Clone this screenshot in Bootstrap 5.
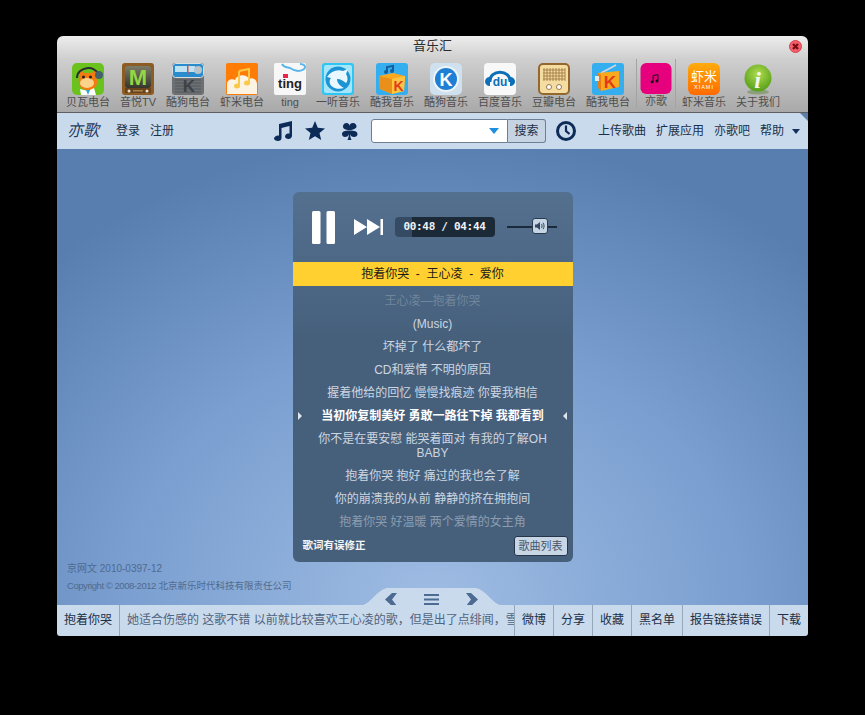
<!DOCTYPE html>
<html lang="zh">
<head>
<meta charset="UTF-8"/>
<title>音乐汇</title>
<link href="https://cdn.jsdelivr.net/npm/bootstrap@5.3.3/dist/css/bootstrap.min.css" rel="stylesheet"/>
<style>
body { background: #000; font-family: "Liberation Sans", "Noto Sans CJK SC", sans-serif; font-size: 12px; }
.app-window { width: 751px; height: 600px; margin: 36px 0 0 57px; border-radius: 6px 6px 3px 3px; overflow: hidden; }

/* barre du haut */
.top-zone { height: 77px; background: linear-gradient(#ededed, #cfcfcf 30%, #a9a9a9); border-bottom: 1px solid #5f5f5f; }
.app-title { height: 27px; line-height: 20px; font-size: 13px; color: #2c2c2c; }
.close-dot { position: absolute; right: 6px; top: 4px; width: 13px; height: 13px; }
.icon-row { padding-left: 9px; gap: 10px; }
.app-item { font-size: 11px; line-height: 13px; color: #4e4e4e; min-width: 32px; white-space: nowrap; }
.app-item svg { width: 32px; height: 32px; display: block; margin-bottom: 1px; }
.app-current { width: 40px; margin: -4px -4px 0; padding-top: 4px; height: 49px; border-left: 1px solid #a3a3a3; border-right: 1px solid #a3a3a3; }

/* barre de navigation */
.nav-zone { height: 36px; background: #c9daed; padding-left: 10px; color: #1b3047; white-space: nowrap; }
.nav-zone > * { flex-shrink: 0; }
.brand-name { width: 49px; font-family: "Liberation Serif", "Noto Sans CJK SC", serif; font-style: italic; font-size: 16px; color: #1e3a5f; }
.nav-pair { gap: 10px; width: 157px; }
.nav-icons { gap: 12px; width: 98px; }
.nav-icons svg, .clock-icon { display: block; fill: #0d2b57; }
.search-box { width: 137px; height: 24px; background: #fff; border: 1px solid #6d7f92; border-radius: 3px 0 0 3px; }
.search-btn { width: 38px; height: 24px; padding: 0; font-size: 12px; line-height: 22px; color: #1b3047; background: #c5d3e3; border: 1px solid #6d7f92; border-left: 0; border-radius: 0 3px 3px 0; }
.clock-icon { margin: 0 22px 0 10px; }
.nav-right { gap: 10px; }
.nav-caret { width: 0; height: 0; margin-left: -2px; border: 4px solid transparent; border-top: 5px solid #14305a; border-bottom: 0; }
.corner-fold { position: absolute; right: 0; top: 0; border-top: 8px solid #5d7ea8; border-left: 8px solid transparent; }

/* zone centrale */
.main-zone { height: 456px; background: radial-gradient(ellipse 560px 470px at 50% 100%, #9fbce3 0, #7a9fd0 55%, #587eb0 100%); }
.player-box { width: 280px; height: 370px; margin-top: 43px; border-radius: 6px; background: linear-gradient(#54708f, #46607c 40%); overflow: hidden; }
.control-row { height: 70px; padding-left: 19px; }
.pause-icon { width: 23px; height: 33px; display: block; margin-right: 19px; }
.next-icon { width: 29px; height: 16px; display: block; margin-right: 12px; }
.time-box { width: 100px; height: 20px; border-radius: 4px; background: linear-gradient(90deg, #354b63 17%, #1c2937 17%); color: #eef2f6; font-family: "DejaVu Sans Mono", monospace; font-weight: 700; font-size: 11px; letter-spacing: -.3px; line-height: 20px; text-align: center; }
.volume-track { width: 50px; height: 2px; margin-left: 12px; background: #1b2a3a; }
.volume-thumb { position: absolute; left: 25px; top: -8px; width: 16px; height: 16px; border: 1px solid #2b3a4c; border-radius: 3px; background: #c6d5e6; }
.song-bar { height: 24px; line-height: 24px; background: #ffd02f; color: #1a1a1a; text-align: center; white-space: pre; }
.lyric-list { height: 248px; padding: 8px 25px 0; overflow: hidden; text-align: center; color: #cdd6e0; line-height: 14px; }
.lyric-list p { margin: 0 0 9px; }
.lyric-fade1 { color: #71869c; }
.lyric-fade2 { color: #8c9db0; }
.lyric-now { color: #fff; font-weight: 700; margin: 0 -20px 9px !important; }
.tri-r { width: 0; height: 0; border-left: 4px solid #dfe6ee; border-top: 4px solid transparent; border-bottom: 4px solid transparent; }
.tri-l { width: 0; height: 0; border-right: 4px solid #dfe6ee; border-top: 4px solid transparent; border-bottom: 4px solid transparent; }
.player-foot { height: 28px; padding: 0 5px 4px 10px; }
.fix-link { font-size: 10.5px; font-weight: 700; color: #f2f5f8; }
.list-btn { width: 54px; height: 20px; padding: 0; font-size: 11px; line-height: 18px; color: #46566a; background: #c8d5e4; border: 1px solid #25364a; border-radius: 3px; }
.bottom-row { height: 43px; margin-top: auto; }
.legal-text { width: 306px; margin-top: -2px; padding-left: 10px; color: #4f6a8f; font-size: 9.5px; line-height: 17px; }
.legal-first { font-size: 10px; }
.legal-latin { letter-spacing: -.45px; }
.tab-box { width: 137px; height: 17px; padding: 6px 22px 0; background: #c9daed; clip-path: path("M0 17 C8 15 14 2 24 0 L113 0 C123 2 129 15 137 17 Z"); }

/* barre du bas */
.foot-zone { height: 31px; background: #c9daed; line-height: 30px; color: #1b3047; white-space: nowrap; }
.foot-cell { padding: 0 7px; border-left: 1px solid #97a7ba; flex: none; }
.foot-first { width: 63px; padding: 0; text-align: center; border-left: 0; border-right: 1px solid #97a7ba; flex: none; }
.foot-scroll { padding-left: 7px; color: #50647e; overflow: hidden; min-width: 0; }
</style>
</head>
<body>
<div class="app-window d-flex flex-column">

  <!-- barre du haut avec les icônes -->
  <div class="top-zone flex-shrink-0">
    <div class="app-title position-relative text-center">音乐汇
      <svg class="close-dot" viewBox="0 0 13 13"><circle cx="6.5" cy="6.5" r="6" fill="#f2606c" stroke="#d8404c"/><path d="M4 4l5 5M9 4l-5 5" stroke="#7c0d16" stroke-width="2.4"/></svg>
    </div>
    <div class="icon-row d-flex">
      <div class="app-item d-flex flex-column align-items-center">
        <svg viewBox="0 0 32 32"><rect width="32" height="32" rx="5" fill="#6cc21d"/><path d="M8 6l4 4h8l3-4 1 8c3 6 0 13-8 13S6 21 7 14z" fill="#f47a12"/><ellipse cx="15" cy="20" rx="7" ry="5" fill="#fbd38a"/><circle cx="11.500" cy="14" r="1.500" fill="#222"/><circle cx="18.500" cy="14" r="1.500" fill="#222"/><path d="M5 15C5 4 23 1 27 12" fill="none" stroke="#26322f" stroke-width="2"/><circle cx="27" cy="12" r="4" fill="#45606e"/><path d="M8 26l8 2 6-3 2 7H9z" fill="#fff"/><path d="M14 27l2 5 2-5z" fill="#3aa0dc"/></svg>
        贝瓦电台
      </div>
      <div class="app-item d-flex flex-column align-items-center">
        <svg viewBox="0 0 32 32"><defs><linearGradient id="gTv" x1="0" y1="0" x2="0" y2="1"><stop offset="0" stop-color="#7d7c68"/><stop offset="1" stop-color="#35352c"/></linearGradient></defs><rect width="32" height="32" rx="3" fill="#8d5c24"/><rect x="3" y="3" width="26" height="22" rx="3" fill="url(#gTv)"/><text x="16" y="22" text-anchor="middle" font-family="Liberation Sans" font-weight="700" font-size="22" fill="#93d643">M</text><rect x="3" y="25" width="26" height="5" fill="#6b431a"/><circle cx="7" cy="28" r="1.500" fill="#e9dfcf"/><circle cx="25" cy="28" r="1.500" fill="#e9dfcf"/><rect x="11" y="27" width="10" height="1.500" fill="#a68250"/></svg>
        音悦TV
      </div>
      <div class="app-item d-flex flex-column align-items-center">
        <svg viewBox="0 0 32 32"><rect width="32" height="32" rx="3" fill="#6d7072"/><rect x=".5" y=".5" width="31" height="14" rx="3" fill="#2a8ccc" stroke="#d8dde0"/><rect x="3" y="3" width="20" height="6" fill="#bfe2f2"/><rect x="15" y="2" width="1.500" height="9" fill="#e0483a"/><circle cx="26" cy="7" r="4" fill="#b9c3ca"/><path d="M3 17h26M3 20h26M3 23h26M3 26h26M3 29h26" stroke="#55595c" stroke-width="1.200"/><text x="17" y="29" text-anchor="middle" font-family="Liberation Sans" font-weight="700" font-size="17" fill="#3e4245">K</text></svg>
        酷狗电台
      </div>
      <div class="app-item d-flex flex-column align-items-center">
        <svg viewBox="0 0 32 32"><rect width="32" height="32" rx="2" fill="#ff7d06"/><path d="M1 31V21c0-4 5-6 8-4 2-6 12-6 14-1 4-2 8 1 8 5v10z" fill="#fdf3e3"/><path d="M13 8l10-2v14" fill="none" stroke="#fbc94a" stroke-width="2"/><path d="M13 8v15" stroke="#fbc94a" stroke-width="2"/><ellipse cx="11" cy="23" rx="3" ry="2.500" fill="#fbc94a"/><ellipse cx="21" cy="20" rx="3" ry="2.500" fill="#fbc94a"/></svg>
        虾米电台
      </div>
      <div class="app-item d-flex flex-column align-items-center">
        <svg viewBox="0 0 32 32"><rect width="32" height="32" rx="2" fill="#f7f7f7"/><path d="M8 1c2 4 6 3 8 4 3 2 5 3 8 3 4 0 7-2 7-4s-3-3-5-3" fill="none" stroke="#58b6ea" stroke-width="2"/><rect x="9" y="11" width="5" height="4" fill="#e8264a"/><text x="16" y="25" text-anchor="middle" font-family="Liberation Sans" font-weight="700" font-size="13" fill="#222">ting</text></svg>
        ting
      </div>
      <div class="app-item d-flex flex-column align-items-center">
        <svg viewBox="0 0 32 32"><rect width="32" height="32" rx="3" fill="#2fc5f5"/><rect x="2" y="2" width="28" height="28" rx="2" fill="#a6e6fb"/><circle cx="16" cy="16" r="12.500" fill="#1b94d6"/><path d="M5 14c4-6 10-8 16-6l5-2-2 5c2 3 2 7 0 9-3-2-5-4-9-4 0 4 3 7 7 9-6 2-12 0-14-4-1-3 0-5 1-6z" fill="#e9f8fe"/></svg>
        一听音乐
      </div>
      <div class="app-item d-flex flex-column align-items-center">
        <svg viewBox="0 0 32 32"><rect width="32" height="32" rx="3" fill="#35aef0"/><path d="M3 13l14-3 12 3-1 15-12 3-12-5z" fill="#f8a91f"/><path d="M16 16l13-3-1 15-12 3z" fill="#fbc541"/><path d="M3 13l13 3v15l-12-5z" fill="#e8901a"/><text x="22.500" y="28" text-anchor="middle" font-family="Liberation Sans" font-weight="700" font-size="14" fill="#e33a1a">K</text><path d="M11 9V4l6-1v5" fill="none" stroke="#155f9c" stroke-width="2"/><circle cx="10" cy="9" r="2" fill="#155f9c"/><circle cx="16" cy="8" r="2" fill="#155f9c"/></svg>
        酷我音乐
      </div>
      <div class="app-item d-flex flex-column align-items-center">
        <svg viewBox="0 0 32 32"><rect width="32" height="32" rx="5" fill="#cfe1ef"/><circle cx="16" cy="16" r="13" fill="#eef4f8"/><circle cx="16" cy="16" r="11" fill="#1f7fd4"/><text x="16" y="22.500" text-anchor="middle" font-family="Liberation Sans" font-weight="700" font-size="18" fill="#fff">K</text></svg>
        酷狗音乐
      </div>
      <div class="app-item d-flex flex-column align-items-center">
        <svg viewBox="0 0 32 32"><rect width="32" height="32" rx="4" fill="#f8f8f8"/><path d="M6 19C5 6 27 6 26 19" fill="none" stroke="#0d6fb8" stroke-width="3"/><path d="M6 14v9C3 23 1 21 1 18.500S3 14 6 14zM26 14v9c3 0 5-2 5-4.500S29 14 26 14z" fill="#0d6fb8"/><text x="16" y="23" text-anchor="middle" font-family="Liberation Sans" font-weight="700" font-size="12" fill="#0d6fb8">du</text></svg>
        百度音乐
      </div>
      <div class="app-item d-flex flex-column align-items-center">
        <svg viewBox="0 0 32 32"><rect x="1" y="1" width="30" height="30" rx="4" fill="#f5dca0" stroke="#94672f" stroke-width="2"/><path d="M6 5v13M9 5v13M12 5v13M15 5v13M18 5v13M21 5v13M24 5v13M27 5v13M5 7h22M5 10h22M5 13h22M5 16h22" stroke="#a17a45" stroke-width=".9"/><circle cx="11" cy="24" r="2.500" fill="#fff" stroke="#9a7a4c"/><circle cx="21" cy="24" r="2.500" fill="#fff" stroke="#9a7a4c"/></svg>
        豆瓣电台
      </div>
      <div class="app-item d-flex flex-column align-items-center">
        <svg viewBox="0 0 32 32"><rect width="32" height="32" rx="3" fill="#35aef0"/><path d="M9 10L24 2" stroke="#cfd8de" stroke-width="1.500"/><path d="M6 10l21-2v16L9 28z" fill="#f8a91f"/><path d="M6 10l3 2v16l-3-3z" fill="#e57f17"/><rect x="3" y="13" width="4" height="5" fill="#e8e8e8"/><text x="18" y="25" text-anchor="middle" font-family="Liberation Sans" font-weight="700" font-size="17" fill="#e33a1a">K</text></svg>
        酷我电台
      </div>
      <div class="app-item app-current d-flex flex-column align-items-center">
        <svg viewBox="0 0 32 32"><rect width="32" height="32" rx="6" fill="#e6007e"/><path d="M13 13l5-1v6" fill="none" stroke="#111" stroke-width="1"/><path d="M13 13v6" stroke="#111" stroke-width="1"/><circle cx="12" cy="19.500" r="1.500" fill="#111"/><circle cx="17" cy="18.500" r="1.500" fill="#111"/></svg>
        亦歌
      </div>
      <div class="app-item d-flex flex-column align-items-center">
        <svg viewBox="0 0 32 32"><defs><linearGradient id="gXiami" x1="0" y1="0" x2="0" y2="1"><stop offset="0" stop-color="#ffac0c"/><stop offset="1" stop-color="#ff6a00"/></linearGradient></defs><rect width="32" height="32" rx="6" fill="url(#gXiami)"/><text x="16" y="18" text-anchor="middle" font-family="Noto Sans CJK SC" font-size="13" fill="#fff">虾米</text><text x="16" y="25.500" text-anchor="middle" font-family="Liberation Sans" font-size="5.500" letter-spacing="1" fill="#fff">XIAMI</text></svg>
        虾米音乐
      </div>
      <div class="app-item d-flex flex-column align-items-center">
        <svg viewBox="0 0 32 32"><defs><radialGradient id="gInfo" cx=".5" cy=".35" r=".7"><stop offset="0" stop-color="#b0dc50"/><stop offset="1" stop-color="#4e9a14"/></radialGradient></defs><ellipse cx="16" cy="29" rx="11" ry="2.500" fill="#6e8f52" opacity=".6"/><circle cx="16" cy="15" r="13.500" fill="url(#gInfo)"/><text x="15.500" y="25" text-anchor="middle" font-family="Liberation Serif" font-weight="700" font-style="italic" font-size="24" fill="#f4f6ee">i</text></svg>
        关于我们
      </div>
    </div>
  </div>

  <!-- barre de navigation -->
  <div class="nav-zone position-relative d-flex align-items-center flex-shrink-0">
    <div class="brand-name">亦歌</div>
    <div class="nav-pair d-flex"><span>登录</span><span>注册</span></div>
    <div class="nav-icons d-flex align-items-center">
      <svg width="20" height="20" viewBox="0 0 20 20"><path d="M6 3l13-3v14.500c0 2-1.500 3.500-3.500 3.500S12 17 12 15.500s1.500-3 3-3c.6 0 1.200.1 1.500.3V5L8.500 7v10c0 2-1.500 3-3.500 3S1 19 1 17.500s2-3 4-3c.4 0 .8.1 1 .2z"/></svg>
      <svg width="20" height="20" viewBox="0 0 20 20"><path d="M10 0l2.800 6.800 7.200.6-5.500 4.700 1.700 7L10 15.300 3.800 19.100l1.700-7L0 7.400l7.200-.6z"/></svg>
      <svg class="ms-1" width="18" height="18" viewBox="0 0 18 18"><path d="M8.500 8C4 8 2 6.500 2 4.500S3.500 1 5.500 1c2 0 3 1.500 3 3 0-1.500 1-3 3.500-3s3.500 2 3.500 3.500S13 8 8.500 8zM8.500 8.500c-4.500 0-7.500 1-7.500 3.500 0 2 1.500 3 3 3 2 0 3.500-1 4-3-.2 2-.5 4-1.500 6h4c-1-2-1.300-4-1.500-6 .5 2 2 3 4 3s3.500-1 3.500-3c0-2.500-3-3.500-8-3.500z"/></svg>
    </div>
    <div class="search-box position-relative d-flex align-items-center justify-content-end pe-2">
      <div class="search-arrow"><svg width="10" height="6" viewBox="0 0 10 6" class="d-block"><path d="M0 0h10L5 6z" fill="#1e8fe0"/></svg></div>
    </div>
    <button class="search-btn" type="button">搜索</button>
    <svg class="clock-icon" width="20" height="20" viewBox="0 0 20 20"><circle cx="10" cy="10" r="8.500" fill="none" stroke="#0d2b57" stroke-width="3"/><path d="M10 4.500V10l3.500 3" fill="none" stroke="#0d2b57" stroke-width="2.200"/></svg>
    <div class="nav-right d-flex align-items-center">
      <span>上传歌曲</span><span>扩展应用</span><span>亦歌吧</span><span>帮助</span><span class="nav-caret"></span>
    </div>
    <div class="corner-fold"></div>
  </div>

  <!-- zone centrale -->
  <div class="main-zone d-flex flex-column flex-shrink-0">
    <div class="player-box align-self-center flex-shrink-0">
      <div class="control-row d-flex align-items-center">
        <svg class="pause-icon" viewBox="0 0 23 33"><rect width="8.500" height="33" rx="1.500" fill="#fff"/><rect x="14.500" width="8.500" height="33" rx="1.500" fill="#fff"/></svg>
        <svg class="next-icon" viewBox="0 0 29 16"><path d="M0 0l13 8-13 8zM13 0l13 8-13 8z" fill="#fff"/><rect x="26.500" width="2.500" height="16" fill="#fff"/></svg>
        <div class="time-box">00:48 / 04:44</div>
        <div class="volume-track position-relative">
          <div class="volume-thumb d-flex align-items-center justify-content-center">
            <svg width="10" height="10" viewBox="0 0 10 10"><path d="M0 3.500h2L5 1v8L2 6.500H0z" fill="#33465c"/><path d="M6.500 3c.7.800.7 3.200 0 4M8 1.800c1.400 1.600 1.400 4.800 0 6.400" fill="none" stroke="#33465c"/></svg>
          </div>
        </div>
      </div>
      <div class="song-bar">抱着你哭  -  王心凌  -  爱你</div>
      <div class="lyric-list">
        <p class="lyric-fade1">王心凌—抱着你哭</p>
        <p>(Music)</p>
        <p>坏掉了 什么都坏了</p>
        <p>CD和爱情 不明的原因</p>
        <p>握着他给的回忆 慢慢找痕迹 你要我相信</p>
        <p class="lyric-now d-flex align-items-center justify-content-between"><span class="tri-r"></span><span>当初你复制美好 勇敢一路往下掉 我都看到</span><span class="tri-l"></span></p>
        <p>你不是在要安慰 能哭着面对 有我的了解OH BABY</p>
        <p>抱着你哭 抱好 痛过的我也会了解</p>
        <p>你的崩溃我的从前 静静的挤在拥抱间</p>
        <p class="lyric-fade2">抱着你哭 好温暖 两个爱情的女主角</p>
      </div>
      <div class="player-foot d-flex align-items-center justify-content-between">
        <span class="fix-link">歌词有误修正</span>
        <button class="list-btn" type="button">歌曲列表</button>
      </div>
    </div>
    <div class="bottom-row d-flex align-items-end">
      <div class="legal-text align-self-start">
        <div class="legal-first">京网文 2010-0397-12</div>
        <div><span class="legal-latin">Copyright © 2008-2012</span> 北京新乐时代科技有限责任公司</div>
      </div>
      <div class="tab-box d-flex align-items-center justify-content-between">
        <svg width="12" height="13" viewBox="0 0 12 13"><path d="M7 0h5L7 6.500 12 13H7L0 6.500z" fill="#4c6a92"/></svg>
        <svg width="15" height="11" viewBox="0 0 15 11"><path d="M0 0h15v2H0zM0 4.500h15v2H0zM0 9h15v2H0z" fill="#4c6a92"/></svg>
        <svg width="12" height="13" viewBox="0 0 12 13"><path d="M5 0H0l5 6.500L0 13h5l7-6.500z" fill="#4c6a92"/></svg>
      </div>
    </div>
  </div>

  <!-- barre du bas -->
  <div class="foot-zone d-flex flex-shrink-0">
    <div class="foot-first">抱着你哭</div>
    <div class="foot-scroll flex-fill">她适合伤感的 这歌不错 以前就比较喜欢王心凌的歌，但是出了点绯闻，雪</div>
    <div class="foot-cell">微博</div>
    <div class="foot-cell">分享</div>
    <div class="foot-cell">收藏</div>
    <div class="foot-cell">黑名单</div>
    <div class="foot-cell">报告链接错误</div>
    <div class="foot-cell">下载</div>
  </div>
</div>
<script src="https://cdn.jsdelivr.net/npm/bootstrap@5.3.3/dist/js/bootstrap.bundle.min.js"></script>
</body>
</html>
